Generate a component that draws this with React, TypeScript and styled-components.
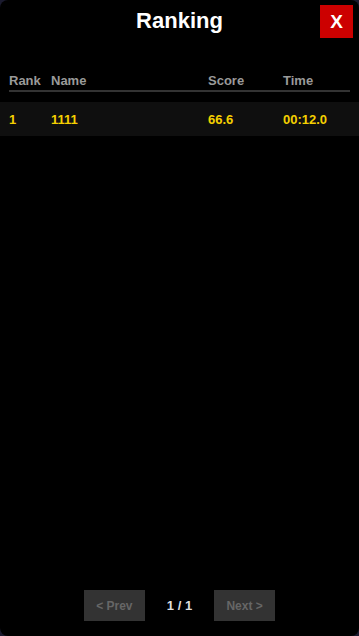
import React from "react";
import styled, { createGlobalStyle } from "styled-components";

const GlobalStyle = createGlobalStyle`
  html, body {
    margin: 0;
    padding: 0;
    background: #1a1a2e;
    font-family: "Liberation Sans", Arial, sans-serif;
  }
  #root {
    height: 100vh;
  }
`;

const Panel = styled.div`
  height: 100%;
  box-sizing: border-box;
  background: #000;
  border-radius: 8px;
  display: flex;
  flex-direction: column;
  color: #fff;
`;

const Header = styled.div`
  position: relative;
  height: 42px;
  display: flex;
  align-items: center;
  justify-content: center;
`;

const Title = styled.h2`
  margin: 0;
  font-size: 22px;
  font-weight: bold;
  color: #fff;
`;

const CloseButton = styled.button`
  position: absolute;
  top: 5px;
  right: 6px;
  width: 33px;
  height: 33px;
  border: none;
  background: #cc0000;
  color: #fff;
  font-family: inherit;
  font-size: 19px;
  font-weight: bold;
  padding: 0;
  cursor: pointer;
`;

const Table = styled.div`
  margin-top: 28px;
  flex: 1;
`;

const Row = styled.div<{ $head?: boolean }>`
  display: grid;
  grid-template-columns: 42px 157px 75px 1fr;
  align-items: center;
  font-size: 13px;
  font-weight: bold;
  color: ${(p) => (p.$head ? "#9a9a9a" : "#f5d000")};
  background: ${(p) => (p.$head ? "transparent" : "#0f0f0f")};
  height: ${(p) => (p.$head ? "20px" : "34px")};
  padding: 0 9px;
  margin: ${(p) => (p.$head ? "0 9px 10px" : "0")};
  ${(p) => (p.$head ? "padding: 0; border-bottom: 2px solid #333;" : "")}
`;

const Pager = styled.div`
  display: flex;
  align-items: center;
  justify-content: center;
  gap: 22px;
  padding-bottom: 15px;
`;

const PageButton = styled.button`
  width: 61px;
  height: 31px;
  border: none;
  background: #333;
  color: #666;
  font-family: inherit;
  font-size: 12px;
  font-weight: bold;
  padding: 0;
`;

const PageInfo = styled.span`
  font-size: 13px;
  font-weight: bold;
  color: #ddd;
`;

const rows = [{ rank: 1, name: "1111", score: "66.6", time: "00:12.0" }];

export default function App() {
  return (
    <>
      <GlobalStyle />
      <Panel>
        <Header>
          <Title>Ranking</Title>
          <CloseButton>X</CloseButton>
        </Header>
        <Table>
          <Row $head>
            <span>Rank</span>
            <span>Name</span>
            <span>Score</span>
            <span>Time</span>
          </Row>
          {rows.map((r) => (
            <Row key={r.rank}>
              <span>{r.rank}</span>
              <span>{r.name}</span>
              <span>{r.score}</span>
              <span>{r.time}</span>
            </Row>
          ))}
        </Table>
        <Pager>
          <PageButton disabled>&lt; Prev</PageButton>
          <PageInfo>1 / 1</PageInfo>
          <PageButton disabled>Next &gt;</PageButton>
        </Pager>
      </Panel>
    </>
  );
}
